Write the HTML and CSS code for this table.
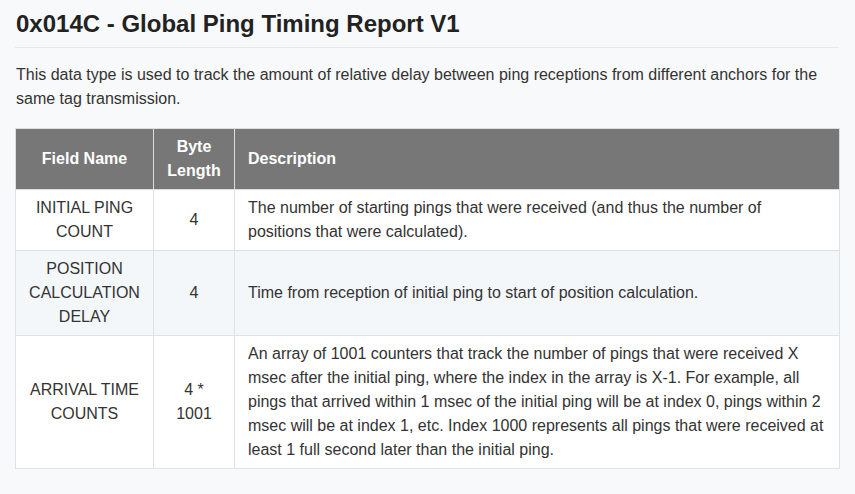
FILE: index.html
```html
<!DOCTYPE html>
<html>
<head>
<meta charset="utf-8">
<link rel="stylesheet" href="styles.css">
</head>
<body>
<div class="page">
  <h1 class="title">0x014C - Global Ping Timing Report V1</h1>
  <p class="intro">This data type is used to track the amount of relative delay between ping receptions from different anchors for the same tag transmission.</p>
  <table class="fields">
    <colgroup>
      <col class="c-name">
      <col class="c-len">
      <col class="c-desc">
    </colgroup>
    <thead>
      <tr>
        <th class="center">Field Name</th>
        <th class="center">Byte Length</th>
        <th>Description</th>
      </tr>
    </thead>
    <tbody>
      <tr>
        <td class="center">INITIAL PING COUNT</td>
        <td class="center">4</td>
        <td>The number of starting pings that were received (and thus the number of positions that were calculated).</td>
      </tr>
      <tr class="alt">
        <td class="center">POSITION CALCULATION DELAY</td>
        <td class="center">4</td>
        <td>Time from reception of initial ping to start of position calculation.</td>
      </tr>
      <tr>
        <td class="center">ARRIVAL TIME COUNTS</td>
        <td class="center">4 * 1001</td>
        <td>An array of 1001 counters that track the number of pings that were received X msec after the initial ping, where the index in the array is X-1. For example, all pings that arrived within 1 msec of the initial ping will be at index 0, pings within 2 msec will be at index 1, etc. Index 1000 represents all pings that were received at least 1 full second later than the initial ping.</td>
      </tr>
    </tbody>
  </table>
</div>
</body>
</html>
```

FILE: styles.css
```css
html, body {
  margin: 0;
  padding: 0;
  background: #f8f9fa;
}
body {
  font-family: "Liberation Sans", Arial, sans-serif;
  font-size: 16px;
  line-height: 24px;
  color: #333;
}
.page {
  padding: 0 16px 0 15px;
}
.title {
  margin: 0;
  padding: 10px 0 9px 1px;
  font-size: 24px;
  line-height: 28px;
  font-weight: bold;
  color: #222;
  border-bottom: 1px solid #e5e7e9;
}
.intro {
  margin: 15px 0 17px 1px;
}
.fields {
  width: 825px;
  border-collapse: collapse;
  background: #fff;
}
.c-name { width: 138px; }
.c-len { width: 81px; }
.fields th, .fields td {
  border: 1px solid #dee2e6;
  padding: 6px 12px 6px 13px;
  text-align: left;
  vertical-align: middle;
}
.fields th {
  background: #777;
  color: #fff;
  font-weight: bold;
  border-color: #ddd;
}
.fields .center {
  text-align: center;
  padding-left: 12px;
  padding-right: 12px;
}
.fields tr.alt td {
  background: #f3f7fa;
}
```
